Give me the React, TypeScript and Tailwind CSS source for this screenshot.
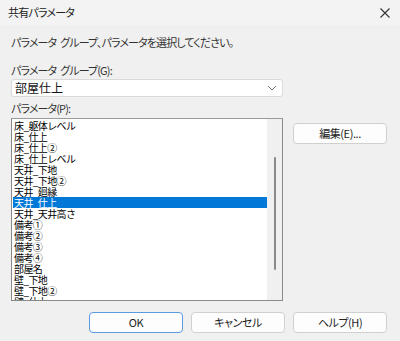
import React from "react";

const items: string[] = [
    "床_躯体レベル",
    "床_仕上",
    "床_仕上②",
    "床_仕上レベル",
    "天井_下地",
    "天井_下地②",
    "天井_廻縁",
    "天井_仕上",
    "天井_天井高さ",
    "備考①",
    "備考②",
    "備考③",
    "備考④",
    "部屋名",
    "壁_下地",
    "壁_下地②",
    "壁_仕上",
];

const selected = 7;

const Button: React.FC<{ label: string; primary?: boolean }> = ({ label, primary }) => (
    <button
        className={
            primary
                ? "w-[94px] h-[21px] rounded-[4px] border border-[#5a9be0] bg-[#fdfdfd] text-[11px] tracking-[-0.04em] text-[#222] leading-none"
                : "w-[94px] h-[21px] rounded-[4px] border border-[#d0d0d0] bg-[#fdfdfd] text-[11px] tracking-[-0.04em] text-[#222] leading-none"
        }
    >
        {label}
    </button>
);

export default function App() {
    return (
        <div
            className="w-[400px] h-[341px] bg-[#f0f0f0] text-[#222] overflow-hidden [font-feature-settings:'palt'] flex flex-col"
            style={{ fontFamily: "'Noto Sans CJK JP', 'Noto Sans', sans-serif" }}
        >
            {/* タイトルバー */}
            <div className="h-[25px] bg-[#f3f3f3] flex items-center justify-between pl-[8px] pr-[9px] shrink-0">
                <span className="text-[11px] leading-none tracking-[-0.07em]">共有パラメータ</span>
                <svg width="12" height="12" viewBox="0 0 12 12">
                    <path d="M1.5 1.5 L10.5 10.5 M10.5 1.5 L1.5 10.5" stroke="#333" strokeWidth="1.1" />
                </svg>
            </div>

            <div className="flex flex-col pl-[11px] pr-[13px]">
                <div className="mt-[11px] text-[11px] leading-[12px] tracking-[-0.08em] text-[#333]">
                    パラメータ<span className="ml-[4px]">グループ、パラメータを選択してください。</span>
                </div>

                <div className="mt-[16px] text-[11px] leading-[12px] tracking-[-0.08em] text-[#333]">
                    パラメータ<span className="ml-[4px]">グループ(G):</span>
                </div>

                {/* グループ選択 */}
                <div className="mt-[3px] w-[272px] h-[18px] bg-white border border-[#d9d9d9] rounded-[3px] flex items-center justify-between pl-[3px] pr-[5px]">
                    <span className="text-[12px] leading-none text-[#111]">部屋仕上</span>
                    <svg width="10" height="6" viewBox="0 0 10 6">
                        <path d="M1 1 L5 5 L9 1" stroke="#777" strokeWidth="1" fill="none" />
                    </svg>
                </div>

                <div className="mt-[5px] text-[11px] leading-[12px] tracking-[-0.08em] text-[#333]">パラメータ(P):</div>

                <div className="mt-[4px] flex items-start">
                    {/* パラメータ一覧 */}
                    <div className="w-[272px] h-[183px] bg-white border border-[#8a8a8a] border-t-[#9a9a9a] flex overflow-hidden">
                        <div className="flex-1 pt-[1px] pl-[1px] flex flex-col [font-feature-settings:normal]">
                            {items.map((item, i) => (
                                <div
                                    key={item}
                                    className={
                                        i === selected
                                            ? "h-[11px] shrink-0 bg-[#0078d7] text-white text-[10px] leading-[11px] pl-[1px] tracking-[-0.06em]"
                                            : "h-[11px] shrink-0 text-black text-[10px] leading-[11px] pl-[1px] tracking-[-0.06em]"
                                    }
                                >
                                    {item}
                                </div>
                            ))}
                        </div>
                        {/* スクロールバー */}
                        <div className="w-[15px] h-full bg-[#f0f0f0] flex justify-center pt-[38px]">
                            <div className="w-[2px] h-[113px] bg-[#8a8a8a] rounded-full" />
                        </div>
                    </div>

                    <div className="ml-[10px] mt-[1px]">
                        <Button label="編集(E)..." />
                    </div>
                </div>

                {/* ボタン */}
                <div className="mt-[11px] flex justify-end gap-[8px]">
                    <Button label="OK" primary />
                    <Button label="キャンセル" />
                    <Button label="ヘルプ(H)" />
                </div>
            </div>
        </div>
    );
}
